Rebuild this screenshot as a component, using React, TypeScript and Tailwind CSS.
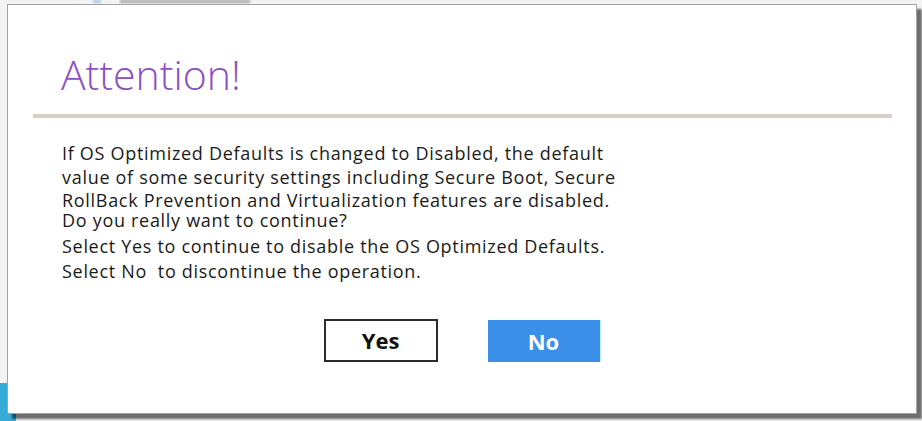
import React from 'react';

const bodyLines = [
  { text: 'If OS Optimized Defaults is changed to Disabled, the default', mt: 'mt-0' },
  { text: 'value of some security settings including Secure Boot, Secure', mt: 'mt-[4px]' },
  { text: 'RollBack Prevention and Virtualization features are disabled.', mt: 'mt-[3px]' },
  { text: 'Do you really want to continue?', mt: 'mt-0' },
  { text: 'Select Yes to continue to disable the OS Optimized Defaults.', mt: 'mt-[6px]' },
  { text: 'Select No\u00a0 to discontinue the operation.', mt: 'mt-[5px]' },
];

export default function App() {
  return (
    <div className="relative w-[922px] h-[421px] overflow-hidden bg-[#f3f3f3]">
      {/* blurred stuff behind the dialog */}
      <div className="absolute left-0 bottom-0 w-[16px] h-[38px] bg-[#35acd8]" />
      <div className="absolute top-0 left-[120px] w-[130px] h-[3px] bg-[#a8a8a8] blur-[1px]" />
      <div className="absolute top-0 left-[93px] w-[8px] h-[3px] bg-[#a9cbe8] blur-[1px]" />

      <div className="relative ml-[7px] mt-[4px] w-[910px] h-[410px] bg-white border border-[#a3a3a3] shadow-[5px_5px_2px_rgba(0,0,0,0.55)] flex flex-col">
        <h1
          className="ml-[53px] mt-[40px] h-[58px] text-[41px] leading-[58px] font-light text-[#8e4fc2]"
          style={{ fontFamily: '"Open Sans", "Noto Sans", sans-serif' }}
        >
          Attention!
        </h1>
        <div className="ml-[25px] mt-[11px] w-[859px] h-[4px] bg-[#d9d0c5]" />

        <div
          className="ml-[54px] mt-[25px] flex flex-col text-[18px] tracking-[0.7px] text-[#1a1a1a]"
          style={{ fontFamily: '"Open Sans", "Noto Sans", sans-serif' }}
        >
          {bodyLines.map((l, i) => (
            <div key={i} className={`h-[20px] leading-[20px] whitespace-pre ${l.mt}`}>
              {l.text}
            </div>
          ))}
        </div>

        <div
          className="mt-[38px] flex justify-center gap-[50px]"
          style={{ fontFamily: '"Open Sans", "Noto Sans", sans-serif' }}
        >
          <button className="w-[114px] h-[43px] border-2 border-[#2b2b2b] bg-white text-[22px] font-bold text-[#111]">
            Yes
          </button>
          <button className="w-[113px] h-[42px] mt-[1px] bg-[#3a8fe8] border-r border-[#bfefff] text-[22px] font-bold text-white">
            No
          </button>
        </div>
      </div>
    </div>
  );
}
